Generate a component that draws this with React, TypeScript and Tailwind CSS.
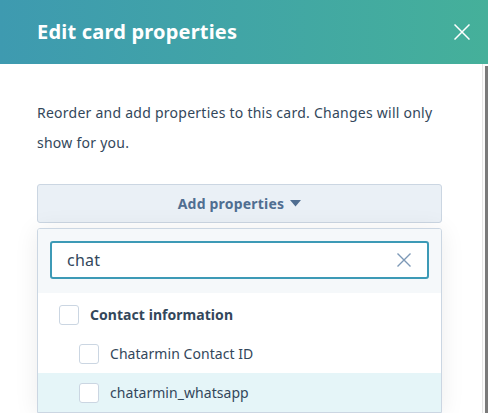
const rows = [
  { label: 'Contact information', indent: false, bold: true, active: false },
  { label: 'Chatarmin Contact ID', indent: true, bold: false, active: false },
  { label: 'chatarmin_whatsapp', indent: true, bold: false, active: true },
];

function Cross({ size, color, width }: { size: number; color: string; width: number }) {
  return (
    <svg width={size} height={size} viewBox={`0 0 ${size} ${size}`}>
      <path d={`M0.5 0.5L${size - 0.5} ${size - 0.5}M${size - 0.5} 0.5L0.5 ${size - 0.5}`} stroke={color} strokeWidth={width} />
    </svg>
  );
}

export default function App() {
  return (
    <div
      className="flex h-[413px] w-[488px] flex-col overflow-hidden bg-white text-[#33475b]"
      style={{ fontFamily: '"Noto Sans", "Open Sans", sans-serif' }}
    >
      {/* Header */}
      <div className="flex h-[64px] shrink-0 items-center justify-between bg-gradient-to-r from-[#3e9ab0] to-[#45b09a] pl-[37px] pr-[18px]">
        <h2 className="text-[20px] font-bold tracking-[0.2px] text-white">Edit card properties</h2>
        <Cross size={16} color="#ffffff" width={1.5} />
      </div>

      <div className="flex min-h-0 flex-1">
        <div className="flex min-w-0 flex-1 flex-col px-[37px] pt-[34px]">
          <p className="text-[14px] leading-[30px] tracking-[0.25px]">
            Reorder and add properties to this card. Changes will only show for you.
          </p>

          <button className="mt-[26px] flex h-[39px] w-[405px] shrink-0 items-center justify-center gap-[6px] rounded-[3px] border border-[#cbd6e2] bg-[#eaf0f6] text-[14px] font-bold tracking-[0.2px] text-[#506e91]">
            Add properties
            <svg width="11" height="7" viewBox="0 0 11 7">
              <path d="M0 0h11L5.5 6.5z" fill="#506e91" />
            </svg>
          </button>

          {/* Dropdown */}
          <div className="mt-[5px] w-[405px] flex-1 overflow-hidden rounded-t-[3px] border border-[#cbd6e2] bg-white shadow-[0_2px_24px_rgba(0,0,0,0.08)]">
            <div className="bg-[#f5f8fa] px-[12px] pb-[14px] pt-[12px]">
              <div className="flex h-[38px] items-center justify-between rounded-[3px] border-2 border-[#3d9ab6] bg-white pl-[15px] pr-[16px]">
                <span className="text-[16px] tracking-[0.2px] text-[#33475b]">chat</span>
                <Cross size={14} color="#7c98b6" width={1.4} />
              </div>
            </div>
            <div className="pt-[2px]">
              {rows.map((r) => (
                <div
                  key={r.label}
                  className={`flex h-[39px] items-center gap-[11px] ${r.indent ? 'pl-[41px]' : 'pl-[21px]'} ${r.active ? 'bg-[#e5f5f8]' : ''}`}
                >
                  <div className="h-[20px] w-[20px] rounded-[3px] border border-[#cbd6e2] bg-white" />
                  <span className={`text-[14px] tracking-[0.05px] ${r.bold ? 'font-bold' : ''}`}>{r.label}</span>
                </div>
              ))}
            </div>
          </div>
        </div>

        {/* Scrollbar */}
        <div className="flex w-[6px] shrink-0 flex-col border-l border-[#e5e5e5] bg-[#fafafa]">
          <div className="h-[2px]" />
          <div className="ml-[2px] flex-1 bg-[#7a7a7a]" />
        </div>
      </div>
    </div>
  );
}
